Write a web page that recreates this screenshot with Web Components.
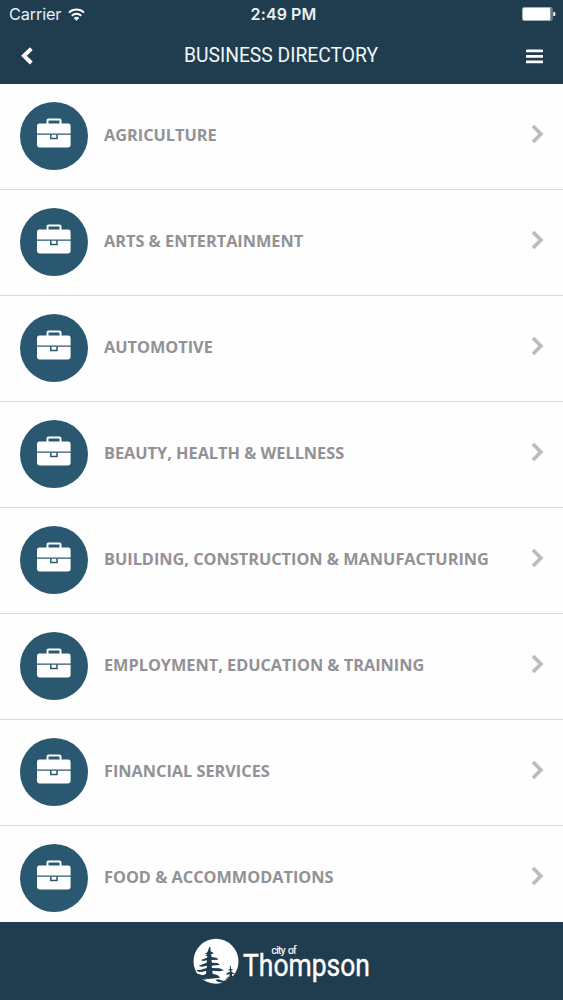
<!DOCTYPE html>
<html lang="en">
<head>
<meta charset="utf-8">
<meta name="viewport" content="width=device-width, initial-scale=1">
<title>Business Directory</title>
<style>
  html, body {
    margin: 0;
    height: 100%;
    overflow: hidden;
  }
</style>
</head>
<body>
<directory-app>
  <status-bar slot="top" carrier="Carrier" time="2:49 PM"></status-bar>
  <nav-bar slot="top">BUSINESS DIRECTORY</nav-bar>
  <category-row>AGRICULTURE</category-row>
  <category-row>ARTS &amp; ENTERTAINMENT</category-row>
  <category-row>AUTOMOTIVE</category-row>
  <category-row>BEAUTY, HEALTH &amp; WELLNESS</category-row>
  <category-row>BUILDING, CONSTRUCTION &amp; MANUFACTURING</category-row>
  <category-row>EMPLOYMENT, EDUCATION &amp; TRAINING</category-row>
  <category-row>FINANCIAL SERVICES</category-row>
  <category-row>FOOD &amp; ACCOMMODATIONS</category-row>
  <city-footer slot="bottom"></city-footer>
</directory-app>

<script>
class DirectoryApp extends HTMLElement {
  constructor() {
    super();
    this.attachShadow({ mode: 'open' });
    this.shadowRoot.innerHTML = `
      <style>
        :host {
          --bar: #203c4f;
          --accent: #2a5870;
          --line: #d8d8da;
          --label: #929195;
          --chevron: #bdbcc0;
          display: flex;
          flex-direction: column;
          height: 100vh;
          background: #fefefe;
          font-family: "Open Sans", sans-serif;
        }

        header {
          flex: none;
          height: 84px;
          background: var(--bar);
          color: #fff;
        }

        main {
          flex: 1;
          min-height: 0;
          overflow: hidden;
        }
      </style>
      <header><slot name="top"></slot></header>
      <main><slot></slot></main>
      <slot name="bottom"></slot>
    `;
  }
}
customElements.define('directory-app', DirectoryApp);

class StatusBar extends HTMLElement {
  constructor() {
    super();
    this.attachShadow({ mode: 'open' });
    this.shadowRoot.innerHTML = `
      <style>
        :host {
          display: grid;
          grid-template-columns: 1fr auto 1fr;
          align-items: center;
          height: 28px;
          padding: 0 7px 0 9px;
          font: 16.3px/28px Inter, sans-serif;
          color: #e6f0f5;
        }

        .left {
          display: flex;
          align-items: center;
          gap: 7px;
        }

        .carrier {
          letter-spacing: -0.15px;
        }

        .time {
          margin-left: 2px;
          font-weight: 600;
          font-size: 16px;
          letter-spacing: 0.1px;
        }

        .battery {
          justify-self: end;
        }

        svg {
          display: block;
        }
      </style>
      <div class="left">
        <span class="carrier"></span>
        <svg width="17" height="13" viewBox="0 0 17 13" fill="none" stroke="#fff" stroke-width="2">
          <path d="M1 4.6a10.8 10.8 0 0 1 15 0" />
          <path d="M3.8 7.7a6.8 6.8 0 0 1 9.4 0" />
          <path d="M8.5 12.8L5.7 10a4 4 0 0 1 5.6 0z" fill="#fff" stroke="none" />
        </svg>
      </div>
      <span class="time"></span>
      <svg class="battery" width="34" height="14" viewBox="0 0 34 14">
        <rect x="0.5" y="0.5" width="29.5" height="13" rx="1.5" fill="none" stroke="#9fb0bb" />
        <rect x="1" y="1" width="27.5" height="12" rx="1" fill="#fff" />
        <path d="M31.3 5h1a1 1 0 0 1 1 1v2a1 1 0 0 1-1 1h-1z" fill="#fff" />
      </svg>
    `;
  }

  connectedCallback() {
    this.shadowRoot.querySelector('.carrier').textContent = this.getAttribute('carrier');
    this.shadowRoot.querySelector('.time').textContent = this.getAttribute('time');
  }
}
customElements.define('status-bar', StatusBar);

class NavBar extends HTMLElement {
  constructor() {
    super();
    this.attachShadow({ mode: 'open' });
    this.shadowRoot.innerHTML = `
      <style>
        :host {
          display: flex;
          align-items: center;
          justify-content: space-between;
          height: 56px;
          box-sizing: border-box;
          padding: 0 20px 0 19px;
          font: 19.3px/24px Roboto, sans-serif;
          color: #f2f7fa;
        }

        .title {
          margin-bottom: 1px;
        }

        button {
          display: block;
          padding: 0;
          border: 0;
          background: none;
        }

        svg {
          display: block;
        }
      </style>
      <button aria-label="Back">
        <svg width="17" height="18" viewBox="0 0 17 18">
          <path d="M12.3 1.6L5 8.8l7.3 7.2" fill="none" stroke="#fff" stroke-width="4" />
        </svg>
      </button>
      <span class="title"><slot></slot></span>
      <button aria-label="Menu">
        <svg width="17" height="15" viewBox="0 0 17 15" fill="#fff">
          <rect y="0.5" width="17" height="2.7" rx="0.5" />
          <rect y="6" width="17" height="2.7" rx="0.5" />
          <rect y="11.5" width="17" height="2.7" rx="0.5" />
        </svg>
      </button>
    `;
  }
}
customElements.define('nav-bar', NavBar);

class CategoryRow extends HTMLElement {
  constructor() {
    super();
    this.attachShadow({ mode: 'open' });
    this.shadowRoot.innerHTML = `
      <style>
        :host {
          display: flex;
          align-items: center;
          gap: 16px;
          height: 106px;
          box-sizing: border-box;
          padding: 0 19px 0 20px;
          border-bottom: 1px solid var(--line);
        }

        .icon {
          flex: none;
          width: 68px;
          height: 68px;
          margin-bottom: 1px;
          border-radius: 50%;
          background: var(--accent);
        }

        .label {
          flex: 1;
          margin-bottom: 4px;
          font-weight: 700;
          font-size: 16.3px;
          line-height: 24px;
          white-space: nowrap;
          color: var(--label);
        }

        .chevron {
          flex: none;
          margin-bottom: 5px;
        }

        svg {
          display: block;
        }
      </style>
      <div class="icon">
        <svg width="68" height="68" viewBox="0 -0.2 68 68">
          <path d="M27.5 22v-3.6q0-1 1-1h11q1 0 1 1V22" fill="none" stroke="#fff" stroke-width="2" />
          <path d="M17 31.2v-7.5q0-2.4 2.4-2.4h28.8q2.4 0 2.4 2.4v7.5z" fill="#fff" />
          <path d="M17 32.6h33.6v10.2q0 2.4-2.4 2.4H19.4q-2.4 0-2.4-2.4z" fill="#fff" />
          <path d="M30.8 32v4.3h6.2V32" fill="none" stroke="var(--accent)" stroke-width="1.5" />
        </svg>
      </div>
      <span class="label"><slot></slot></span>
      <svg class="chevron" width="13" height="20" viewBox="0 0 13 20">
        <path d="M2 2l7.8 8L2 18" fill="none" stroke="var(--chevron)" stroke-width="3.8" />
      </svg>
    `;
  }
}
customElements.define('category-row', CategoryRow);

class CityFooter extends HTMLElement {
  constructor() {
    super();
    this.attachShadow({ mode: 'open' });
    this.shadowRoot.innerHTML = `
      <style>
        :host {
          display: flex;
          justify-content: center;
          align-items: flex-start;
          gap: 4px;
          flex: none;
          height: 78px;
          box-sizing: border-box;
          padding-top: 16px;
          background: var(--bar);
          color: #fff;
          font-family: Roboto, sans-serif;
        }

        svg {
          display: block;
        }

        .wordmark {
          display: flex;
          flex-direction: column;
          align-items: flex-start;
          width: 128px;
          padding-top: 7px;
          white-space: nowrap;
        }

        .small {
          padding-left: 29px;
          font-size: 10px;
          line-height: 12px;
          letter-spacing: -0.55px;
          word-spacing: 1px;
          -webkit-text-stroke: 0.2px #fff;
        }

        /* narrow the letters, they are taller than they are wide */
        .large {
          font-size: 30.5px;
          line-height: 36px;
          margin-top: -9px;
          transform: scaleX(0.868);
          transform-origin: left;
          -webkit-text-stroke: 0.4px #fff;
        }
      </style>
      <svg width="46" height="48" viewBox="0 0 138 144">
        <circle cx="69" cy="70" r="67.5" fill="#fff" />
        <g fill="var(--bar)">
          <!-- tall pine -->
          <path d="M49 27l3 0 1 13 10 6-9 3 2 8 16 3 4 5-21 1 2 8 16 1 8 5-25 3 1 7 23 1 13 6-13 3-22-2 1 9 14 4 9 8-38 4-22-4-14-7 18 1 13-5 1-10-15 4-9-1-7-5 12 0 20-6 1-7-17 3-8-3 24-9 1-7-13 2-5-3 18-7 1-6-8 1 8-5 -7-2 7-4z" />
          <!-- small pine -->
          <path d="M110 83l3 0 1 9 7 4-6 1 1 5 11 5-10 1 1 8 8 4H101l8-4 1-7-11 1 3-5 8-3 1-5-7 0 7-5z" />
          <!-- lower right of the disc is cut away along the shore -->
          <path d="M138 108l-10 4-14 5-12-1 5 5-10 1 4 5-12 1-12-4-10 1 7 6 18 4-13 9h50z" />
          <path d="M0 104l20 5 20 7 12 4-16 1 4 5-14-3-16-9z" />
        </g>
      </svg>
      <div class="wordmark">
        <span class="small">city of</span>
        <span class="large">Thompson</span>
      </div>
    `;
  }
}
customElements.define('city-footer', CityFooter);
</script>
</body>
</html>
